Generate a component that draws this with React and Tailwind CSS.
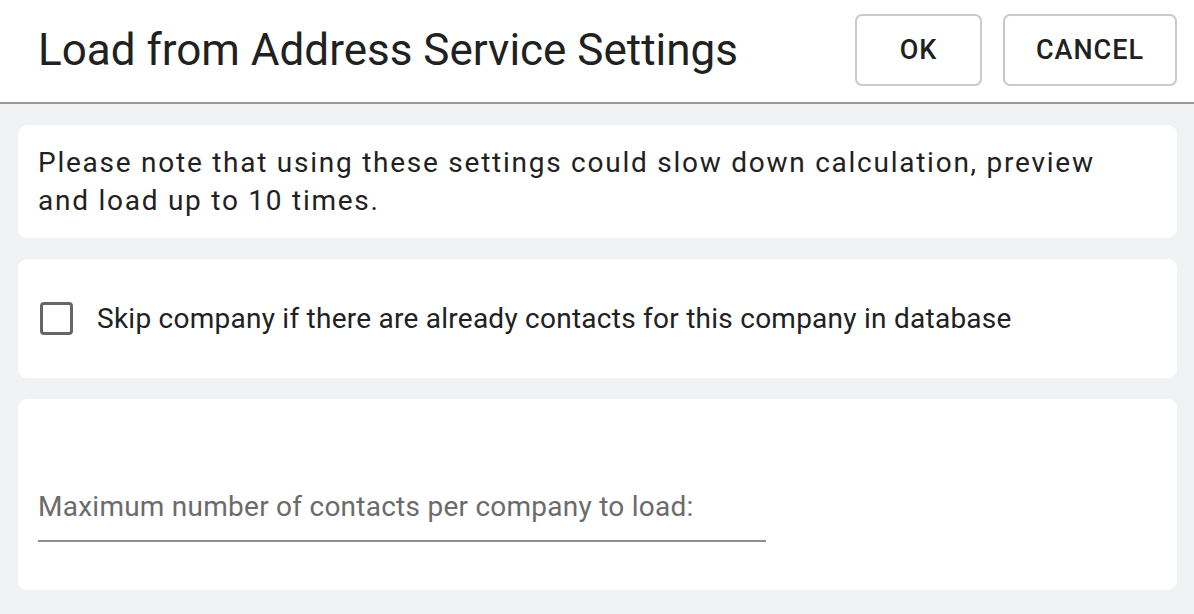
import React, { useState } from "react";

const App = () => {
  const [skip, setSkip] = useState(false);
  const [maxContacts, setMaxContacts] = useState("");
  return (
    <div
      className="w-[1194px] h-[614px] overflow-hidden bg-[#f1f2f4] flex flex-col text-[#212121]"
      style={{ fontFamily: "Roboto, 'Noto Sans', sans-serif" }}
    >
      <div className="h-[104px] shrink-0 bg-white border-b-2 border-[#9a9a9a] flex items-center justify-between pl-[38px] pr-[17px]">
        <h1 className="text-[44px] font-normal leading-none pb-[2px]">
          Load from Address Service Settings
        </h1>
        <div className="flex gap-[21px] pb-[2px]">
          <button className="h-[72px] w-[127px] rounded-[7px] border-2 border-[#cacaca] bg-white text-[27px] font-medium tracking-[1px] text-[#212121]">
            OK
          </button>
          <button className="h-[72px] w-[174px] rounded-[7px] border-2 border-[#cacaca] bg-white text-[27px] font-medium tracking-[1px] text-[#212121]">
            CANCEL
          </button>
        </div>
      </div>
      <div className="flex flex-col gap-[21px] pt-[21px] pl-[18px] pr-[17px]">
        <div className="bg-white rounded-[9px] h-[113px] px-[20px] flex items-center">
          <p className="text-[28px] leading-[38px] tracking-[1.75px]">
            Please note that using these settings could slow down calculation, preview
            <br />
            and load up to 10 times.
          </p>
        </div>
        <div className="bg-white rounded-[9px] h-[119px] px-[22px] flex items-center">
          <label className="flex items-center gap-[24px] cursor-pointer">
            <input
              type="checkbox"
              checked={skip}
              onChange={(e) => setSkip(e.target.checked)}
              className="appearance-none w-[33px] h-[33px] border-[3px] border-[#666] rounded-[4px] bg-white"
            />
            <span className="text-[28px] leading-none tracking-[0.25px]">
              Skip company if there are already contacts for this company in database
            </span>
          </label>
        </div>
        <div className="bg-white rounded-[9px] h-[191px] px-[20px] flex flex-col justify-end pb-[48px]">
          <div className="w-[728px] border-b-2 border-[#8e8e8e] pb-[17px]">
            <input
              value={maxContacts}
              onChange={(e) => setMaxContacts(e.target.value)}
              placeholder="Maximum number of contacts per company to load:"
              className="w-full text-[28px] leading-none tracking-[0.25px] outline-none bg-transparent text-[#212121] placeholder:text-[#6b6b6b]"
            />
          </div>
        </div>
      </div>
    </div>
  );
};

export default App;
